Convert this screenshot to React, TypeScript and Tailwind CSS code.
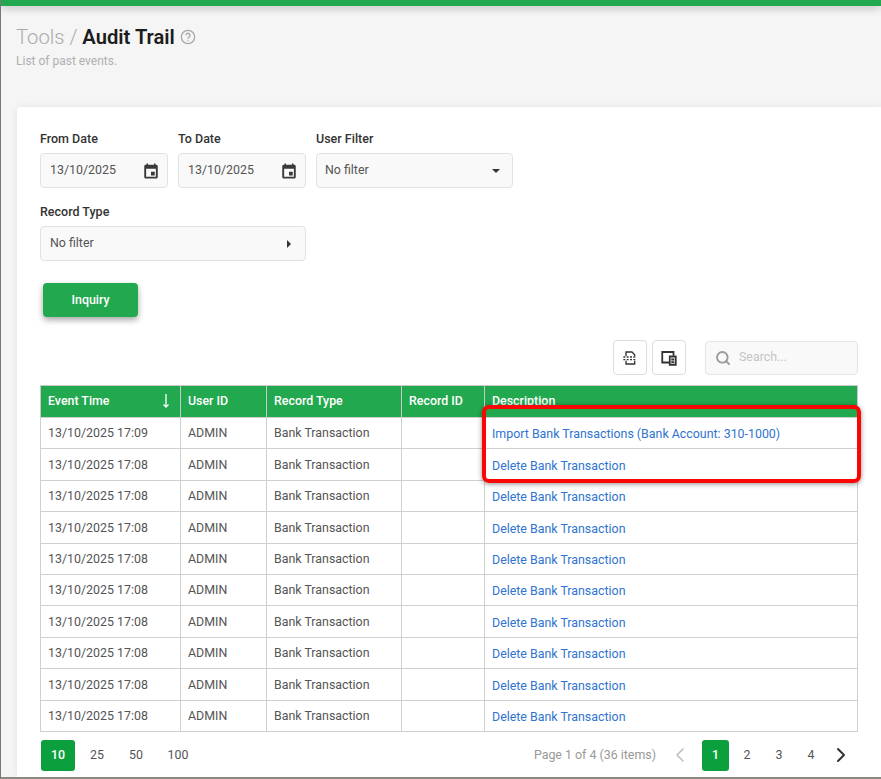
import React from "react";
import { Search, ChevronLeft, ChevronRight } from "lucide-react";

const rows = [
  ["13/10/2025 17:09", "Import Bank Transactions (Bank Account: 310-1000)"],
  ...Array.from({ length: 9 }, () => ["13/10/2025 17:08", "Delete Bank Transaction"]),
];

function Calendar() {
  return (
    <svg width="18" height="18" viewBox="0 0 24 24" fill="#3a3a3a">
      <path d="M19 3.500h-1V2h-2v1.500H8V2H6v1.500H5c-1.110 0-2 .9-2 2V20c0 1.100.89 2 2 2h14c1.100 0 2-.9 2-2V5.500c0-1.100-.9-2-2-2zm-.5 16H5.500V9h13v10.500zM12 13h5v5h-5z" />
    </svg>
  );
}

function DateField({ label, width }: { label: string; width: string }) {
  return (
    <div className={`flex flex-col ${width}`}>
      <div className="text-[12.5px] leading-[16px] font-medium text-[#333] mb-[6px]">{label}</div>
      <div className="h-[35px] rounded-[4px] border border-[#e2e2e2] bg-[#f9f9f9] flex items-center justify-between pl-[9px] pr-[7px] text-[12.4px] text-[#555]">
        <span>13/10/2025</span>
        <Calendar />
      </div>
    </div>
  );
}

function SelectField({ label, width, side }: { label: string; width: string; side?: boolean }) {
  return (
    <div className={`flex flex-col ${width}`}>
      <div className="text-[12.5px] leading-[16px] font-medium text-[#333] mb-[6px]">{label}</div>
      <div
        className={`h-[35px] rounded-[4px] border border-[#e2e2e2] bg-[#f9f9f9] flex items-center justify-between text-[12.4px] text-[#555] ${
          side ? "pl-[9px] pr-[14px]" : "pl-[8px] pr-[12px]"
        }`}
      >
        <span>No filter</span>
        {side ? (
          <span className="w-0 h-0 border-y-[4px] border-y-transparent border-l-[4px] border-l-[#333]" />
        ) : (
          <span className="w-0 h-0 border-x-[4px] border-x-transparent border-t-[4px] border-t-[#333]" />
        )}
      </div>
    </div>
  );
}

function SmallIconButton({ children }: { children: React.ReactNode }) {
  return (
    <div className="w-[34px] h-[35px] rounded-[4px] border border-[#ddd] bg-white flex items-center justify-center">
      {children}
    </div>
  );
}

const th = "border-x border-[#c9c9c9] px-[7px] text-left font-medium text-[12.4px] text-white h-[32px] align-middle";
const tdBase = "border border-[#cfcfcf] px-[7px] text-[12.4px] h-[31.4px] align-middle";
const td = `${tdBase} pt-[1px] text-[#555]`;
const tdLink = `${tdBase} pt-[3px] text-[#2f74d0]`;

export default function App() {
  return (
    <div className="relative w-[881px] h-[779px] overflow-hidden bg-[#f5f5f5] font-['Roboto',sans-serif] border-l border-[#777] border-b-2 border-b-[#8a8a80]">
      <div className="h-[6px] bg-[#22a84e] shadow-[0_2px_8px_rgba(0,0,0,0.25)]" />
      <div className="pl-[15px] pt-[17px] h-[101px]">
        <div className="flex items-center text-[20.2px] leading-[28px]">
          <span className="font-light text-[#aaa]">Tools /&nbsp;</span>
          <span className="font-semibold text-[#1c1c1c]">Audit Trail</span>
          <svg className="ml-[5px]" width="16" height="16" viewBox="0 0 24 24" fill="none" stroke="#a8a8a8" strokeWidth="2">
            <circle cx="12" cy="12" r="10" />
            <path d="M9 9.500a3 3 0 1 1 4.600 2.500c-1 .7-1.600 1.200-1.600 2.500M12 17v1.500" />
          </svg>
        </div>
        <div className="text-[12px] leading-[16px] text-[#b0b0b0] mt-[2px]">List of past events.</div>
      </div>
      <div className="ml-[16px] bg-white rounded-tl-[3px] h-[672px] pl-[23px] pr-[23px] pt-[24px] shadow-[0_0_8px_rgba(0,0,0,0.08)]">
        <div className="flex gap-[10px]">
          <DateField label="From Date" width="w-[128px]" />
          <DateField label="To Date" width="w-[128px]" />
          <SelectField label="User Filter" width="w-[197px]" />
        </div>
        <div className="mt-[16px]">
          <SelectField label="Record Type" width="w-[266px]" side />
        </div>
        <button className="mt-[22px] ml-[3px] w-[95px] h-[34px] rounded-[4px] bg-[#22a84e] text-white text-[12.4px] font-medium shadow-[0_3px_6px_rgba(0,0,0,0.35)] block">
          Inquiry
        </button>
        <div className="mt-[23px] flex justify-end items-center h-[35px]">
          <div className="flex gap-[5px] mr-[19px]">
            <SmallIconButton>
              <svg width="16" height="16" viewBox="0 0 24 24" fill="none" stroke="#333" strokeWidth="2">
                <path d="M6 9V3h9l4 4v2M6 16v5h13v-5" />
                <path d="M2 10.500h20M2 14.500h20" strokeDasharray="3 2" />
              </svg>
            </SmallIconButton>
            <SmallIconButton>
              <svg width="18" height="18" viewBox="0 0 24 24" fill="none" stroke="#333" strokeWidth="2.4">
                <path d="M12 18H3V4h15v5" />
                <path d="M13 10h8v11h-8zM15 14h4M15 17.500h4" />
              </svg>
            </SmallIconButton>
          </div>
          <div className="w-[153px] h-[34px] rounded-[4px] border border-[#e4e4e4] bg-[#f9f9f9] flex items-center pl-[9px] text-[12.4px] text-[#c4c4c4]">
            <Search size={16} color="#9a9a9a" strokeWidth={2.8} />
            <span className="ml-[8px]">Search...</span>
          </div>
        </div>
        <table className="mt-[10px] w-[818px] table-fixed border-collapse">
          <colgroup>
            <col className="w-[140px]" />
            <col className="w-[86px]" />
            <col className="w-[135px]" />
            <col className="w-[83px]" />
            <col />
          </colgroup>
          <thead>
            <tr className="bg-[#22a84e] border-t border-[#c9c9c9]">
              <th className={th}>
                <div className="flex items-center justify-between pr-[3px]">
                  <span>Event Time</span>
                  <svg width="8" height="16" viewBox="0 0 8 16" fill="none" stroke="#fff" strokeWidth="1.3">
                    <path d="M4 1v13M1.500 11.500 4 14l2.500-2.500" />
                  </svg>
                </div>
              </th>
              <th className={th}>User ID</th>
              <th className={th}>Record Type</th>
              <th className={th}>Record ID</th>
              <th className={th}>Description</th>
            </tr>
          </thead>
          <tbody>
            {rows.map((r, i) => (
              <tr key={i}>
                <td className={td}>{r[0]}</td>
                <td className={td}>ADMIN</td>
                <td className={td}>Bank Transaction</td>
                <td className={td}></td>
                <td className={tdLink}>{r[1]}</td>
              </tr>
            ))}
          </tbody>
        </table>
        <div className="mt-[8px] flex items-center justify-between text-[12.4px] text-[#555]">
          <div className="flex items-center">
            <span className="ml-[1px] w-[34px] h-[31px] rounded-[3px] bg-[#0c9f3e] text-white font-medium flex items-center justify-center">10</span>
            <span className="w-[44px] text-center">25</span>
            <span className="w-[34px] text-center">50</span>
            <span className="w-[50px] text-center">100</span>
          </div>
          <div className="flex items-center">
            <span className="text-[#999] mr-[12px]">Page 1 of 4 (36 items)</span>
            <ChevronLeft size={24} color="#bdbdbd" strokeWidth={1.6} />
            <span className="ml-[10px] w-[27px] h-[31px] rounded-[3px] bg-[#0c9f3e] text-white font-medium flex items-center justify-center">1</span>
            <span className="w-[32px] ml-[2px] text-center">2</span>
            <span className="w-[32px] text-center">3</span>
            <span className="w-[32px] text-center">4</span>
            <ChevronRight size={24} color="#333" strokeWidth={2} className="ml-[2px] mr-[5px]" />
          </div>
        </div>
      </div>
      <div className="absolute left-[481px] top-[405px] w-[379px] h-[78px] rounded-[7px] border-[4px] border-[#fb0505] shadow-[0_1px_5px_rgba(0,0,0,0.45)]" />
    </div>
  );
}
